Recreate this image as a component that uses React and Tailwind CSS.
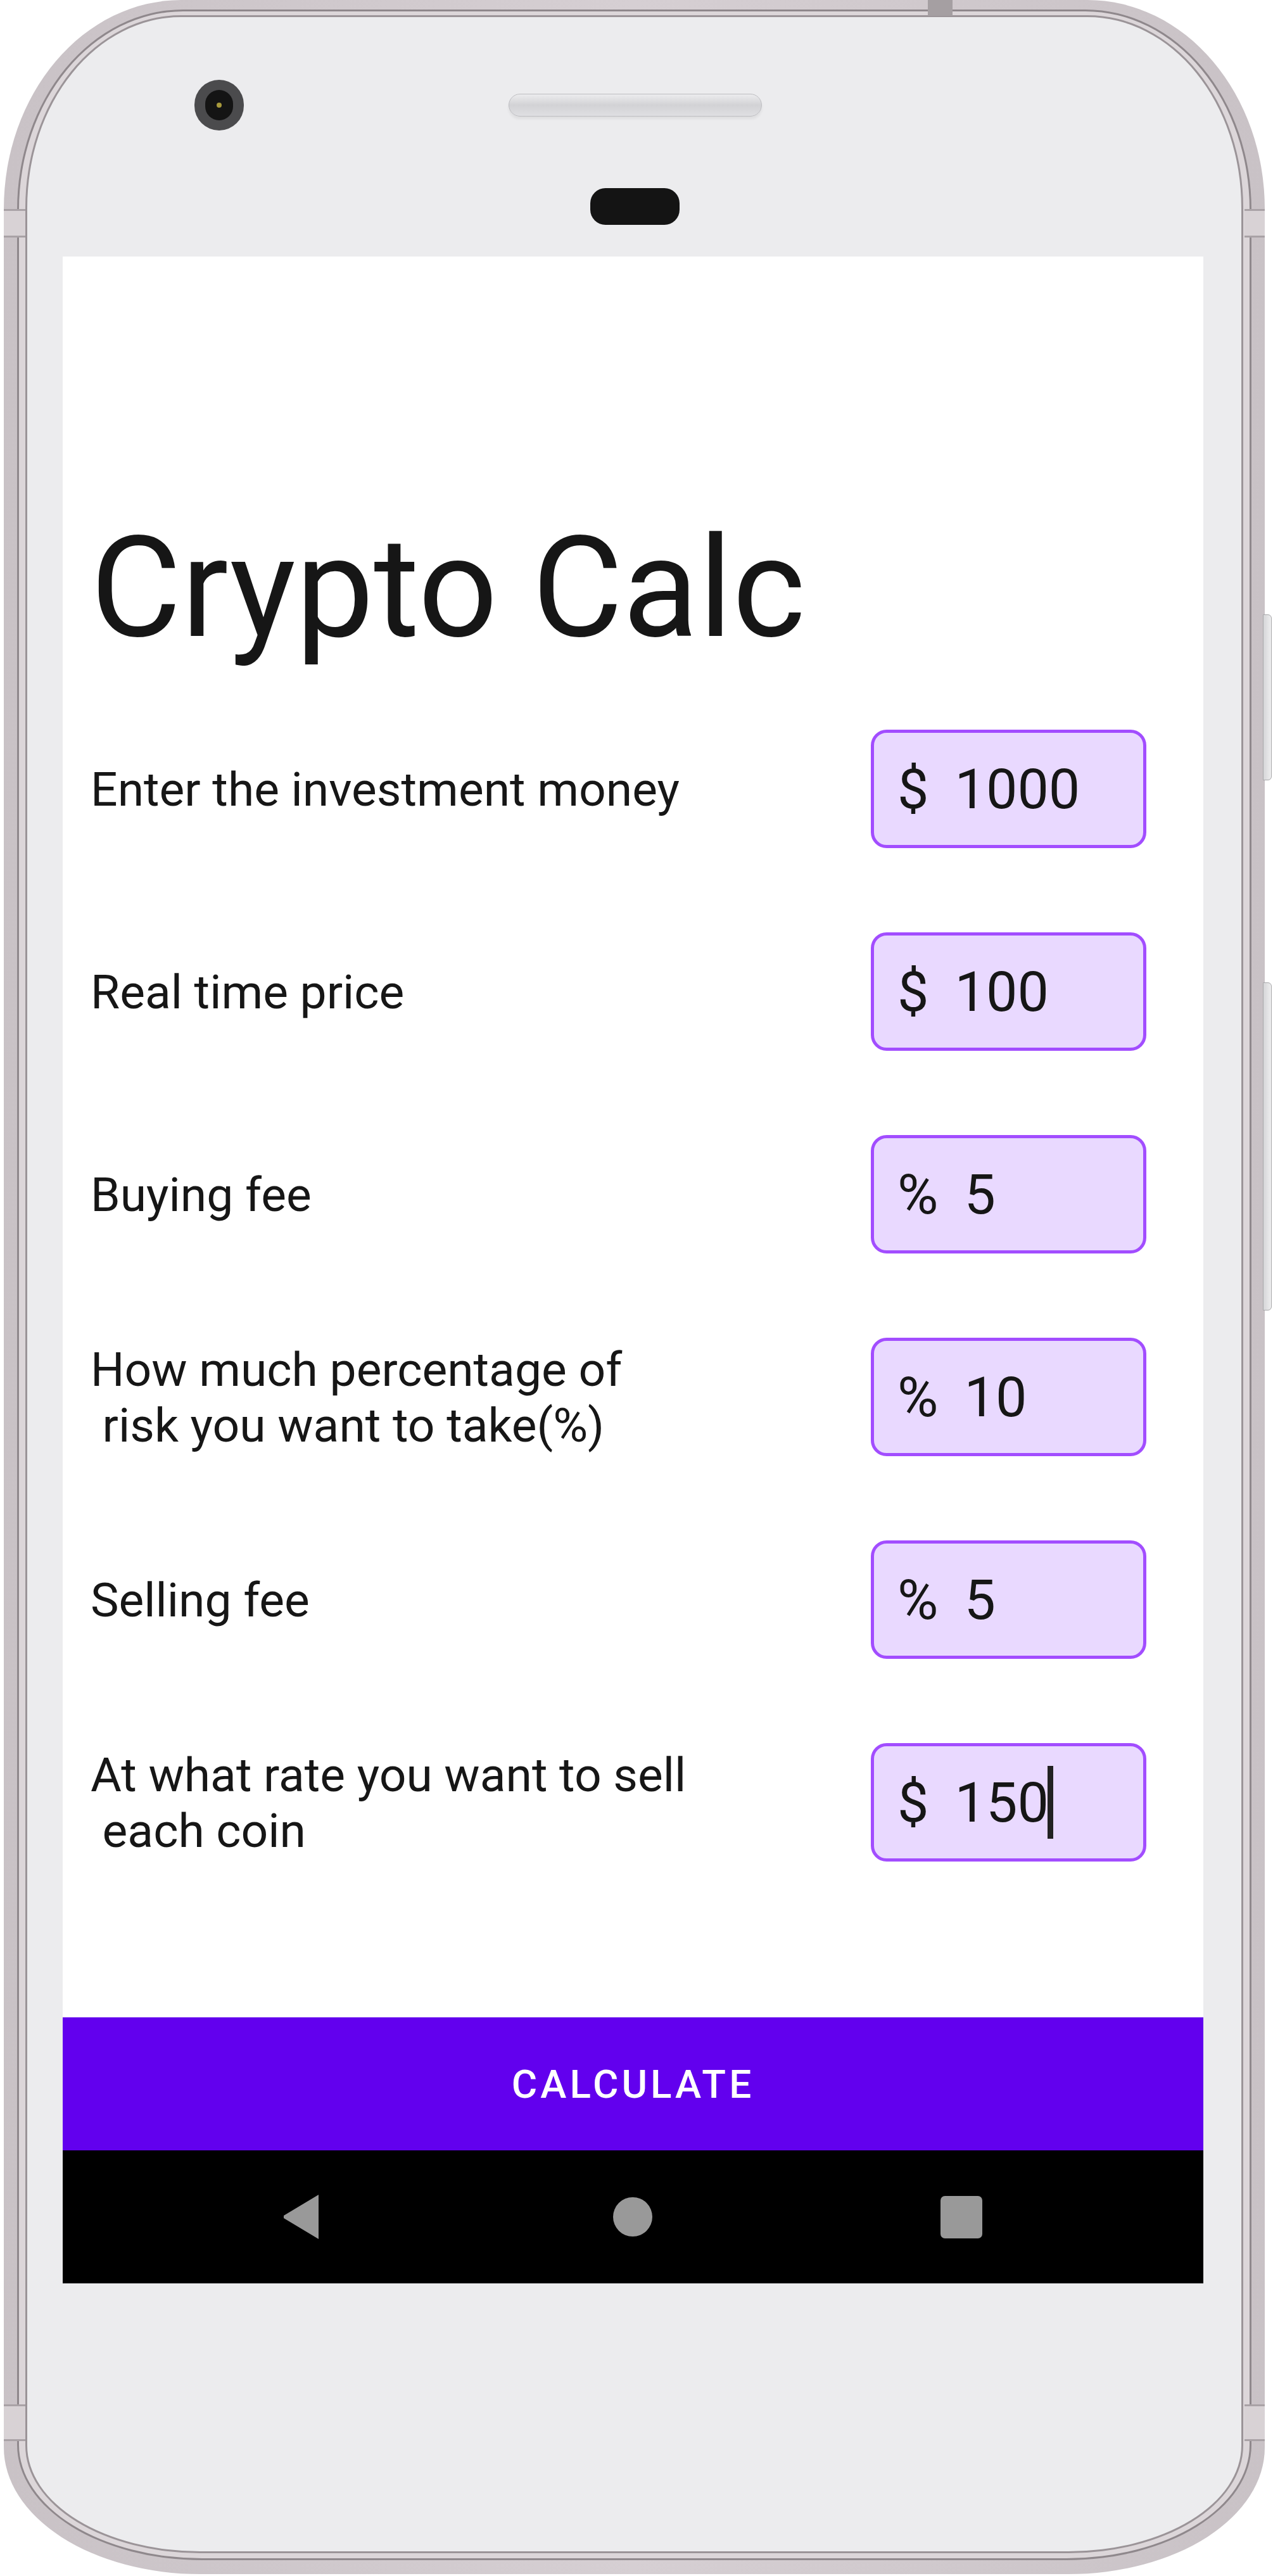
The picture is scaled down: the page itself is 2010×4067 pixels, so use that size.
import React from "react";

const rows = [
  { label: "Enter the investment money", prefix: "$", value: "1000" },
  { label: "Real time price", prefix: "$", value: "100" },
  { label: "Buying fee", prefix: "%", value: "5" },
  { label: "How much percentage of\n risk you want to take(%)", prefix: "%", value: "10" },
  { label: "Selling fee", prefix: "%", value: "5" },
  { label: "At what rate you want to sell\n each coin", prefix: "$", value: "150", cursor: true },
];

function Row({ label, prefix, value, cursor }) {
  return (
    <div className="flex h-[187px] items-center justify-between pr-[90px]">
      <div className="whitespace-pre text-[75px] leading-[88px] text-[#161616]">{label}</div>
      <div className="flex h-[187px] w-[435px] items-center rounded-[25px] border-[5px] border-[#a24dff] bg-[#e9d9ff] pl-[37px] text-[88px] text-[#161616]">
        <span>{prefix}</span>
        <span className="ml-[41px]">{value}</span>
        {cursor && <span className="ml-[-2px] inline-block h-[115px] w-[9px] bg-[#222222]" />}
      </div>
    </div>
  );
}

export default function App() {
  return (
    <div className="relative h-[4067px] w-[2010px] overflow-hidden bg-white font-[Roboto,sans-serif]">
      {/* top notch */}
      <div className="absolute left-[1465px] top-0 z-10 h-[25px] w-[39px] bg-[#a59fa2]" />
      {/* side buttons */}
      <div className="absolute left-[1994px] top-[970px] h-[262px] w-[14px] rounded-r-[6px] border border-[#a8a8aa] bg-gradient-to-r from-[#d6d6d8] to-[#eeeeef]" />
      <div className="absolute left-[1994px] top-[1551px] h-[518px] w-[14px] rounded-r-[6px] border border-[#a8a8aa] bg-gradient-to-r from-[#d6d6d8] to-[#eeeeef]" />
      {/* antenna bands */}
      <div className="absolute left-[6px] top-[330px] z-10 h-[45px] w-[34px] border-y-[3px] border-[#a9a2a6] bg-[#d8d2d5]" />
      <div className="absolute left-[1965px] top-[330px] z-10 h-[45px] w-[32px] border-y-[3px] border-[#a9a2a6] bg-[#d8d2d5]" />
      <div className="absolute left-[6px] top-[3796px] z-10 h-[58px] w-[34px] border-y-[3px] border-[#a9a2a6] bg-[#d8d2d5]" />
      <div className="absolute left-[1965px] top-[3796px] z-10 h-[58px] w-[32px] border-y-[3px] border-[#a9a2a6] bg-[#d8d2d5]" />

      <div className="ml-[6px] h-[4064px] w-[1991px] rounded-tl-[280px_330px] rounded-tr-[280px_330px] rounded-bl-[310px_200px] rounded-br-[310px_200px] bg-gradient-to-r from-[#c9c2c6] via-[#d6cfd3] to-[#c9c2c6] px-[21px] pb-[22px] pt-[15px]">
        <div className="h-full rounded-tl-[262px_316px] rounded-tr-[262px_316px] rounded-bl-[292px_182px] rounded-br-[292px_182px] border-[3px] border-[#8f888c] bg-[#dcd6d9] px-[10px] pb-[8px] pt-[6px]">
          <div className="flex h-full flex-col rounded-tl-[246px_304px] rounded-tr-[246px_304px] rounded-bl-[276px_170px] rounded-br-[276px_170px] border-[3px] border-[#9b9498] bg-[#ececee]">
            {/* top bezel */}
            <div className="h-[378px] shrink-0">
              <div className="flex items-center pt-[99px]">
                <div className="ml-[264px] flex h-[80px] w-[78px] items-center justify-center rounded-full bg-[#4b4b4d]">
                  <div className="relative flex h-[48px] w-[44px] items-center justify-center rounded-full bg-[#141414]">
                    <div className="h-[8px] w-[8px] rounded-full bg-[#a89a3c]" />
                  </div>
                </div>
                <div className="ml-[418px] h-[36px] w-[400px] rounded-[18px] border border-[#bdbdc1] bg-gradient-to-b from-[#ececee] via-[#d2d2d5] to-[#dfdfe2] shadow-[0_4px_4px_rgba(0,0,0,0.06)]" />
              </div>
              <div className="ml-[889px] mt-[91px] h-[58px] w-[141px] rounded-[24px] bg-[#141414]" />
            </div>

            {/* screen */}
            <div className="ml-[56px] flex h-[3200px] w-[1801px] shrink-0 flex-col bg-white">
              <div className="pl-[44px] pt-[395px]">
                <div className="text-[220px] leading-[258px] text-[#161616]">Crypto Calc</div>
                <div className="mt-[94px] flex flex-col gap-[133px]">
                  {rows.map((r, i) => (
                    <Row key={i} {...r} />
                  ))}
                </div>
              </div>
              <div className="flex-1" />
              <div className="flex h-[210px] items-center justify-center bg-[#6200ee] text-[62px] font-medium tracking-[5px] text-white">
                CALCULATE
              </div>
              <div className="flex h-[210px] items-center bg-black pl-[347px]">
                <svg width="57" height="70" viewBox="0 0 57 70">
                  <polygon points="57,0 57,70 2,37 2,33" fill="#999999" />
                </svg>
                <div className="ml-[465px] h-[62px] w-[62px] rounded-full bg-[#999999]" />
                <div className="ml-[455px] h-[67px] w-[66px] rounded-[7px] bg-[#999999]" />
              </div>
            </div>
            <div className="flex-1" />
          </div>
        </div>
      </div>
    </div>
  );
}
